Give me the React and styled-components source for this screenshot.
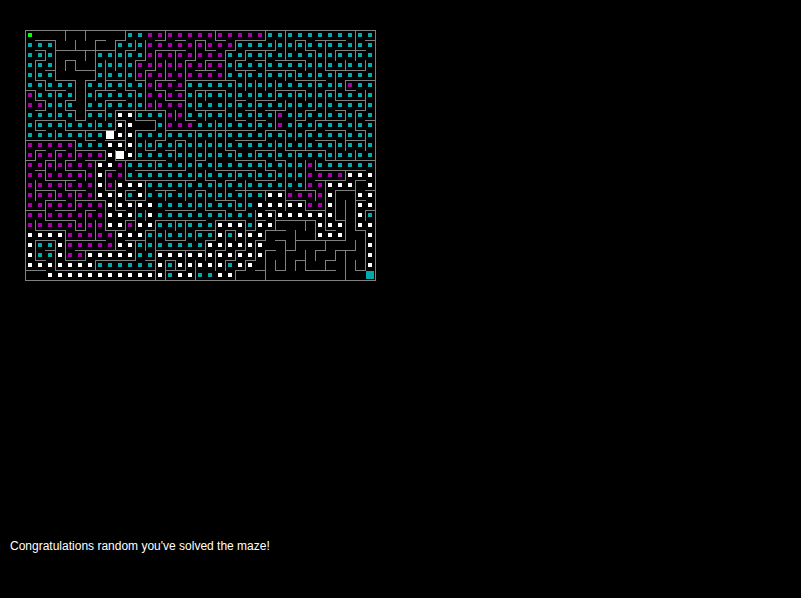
import styled, { createGlobalStyle } from "styled-components";

const GlobalStyle = createGlobalStyle`
    body {
        margin: 0;
        background: #000;
    }
`;

const Page = styled.div`
    width: 801px;
    height: 598px;
    display: flex;
    flex-direction: column;
    background: #000;
    overflow: hidden;
`;
const Board = styled.div`
    position: relative;
    display: grid;
    grid-template-columns: repeat(35, 10px);
    grid-auto-rows: 10px;
    width: 350px;
    margin: 30px 0 0 25px;
`;
const Cell = styled.div`
    display: flex;
    align-items: center;
    justify-content: center;
`;
const colours = { t: "#00aaaa", m: "#aa00aa", w: "#fff", g: "#00ff00", W: "#fff", T: "#00aaaa" };
const Dot = styled.div`
    width: ${(p) => (p.$kind === "W" || p.$kind === "T" ? 8 : 4)}px;
    height: ${(p) => (p.$kind === "W" || p.$kind === "T" ? 8 : 4)}px;
    background: ${(p) => colours[p.$kind]};
`;
const Walls = styled.svg`
    position: absolute;
    left: 0;
    top: 0;
    width: 351px;
    height: 251px;
    shape-rendering: crispEdges;
`;
const Message = styled.p`
    margin: auto 0 45px 10px;
    font-family: "Liberation Sans", Arial, sans-serif;
    font-size: 12px;
    line-height: 14px;
    color: #fff;
`;

// run length rows: t teal, m magenta, w white, g start, W/T big marker, . nothing
const rows = [
    "g1 .9 t2 m12 t11",
    "t3 .6 t3 m9 t14",
    "t3 .4 t5 m8 t15",
    "t3 .4 t4 m9 t15",
    "t3 .4 t4 m9 t15",
    "t5 .1 t6 m4 t16 m1 t2",
    "m1 t4 .1 t6 m4 t19",
    "m2 t3 .1 t6 m4 t19",
    "t5 .1 t3 w2 t3 m2 t9 m1 t9",
    "t9 w2 .2 t1 m3 t8 m1 t9",
    "t8 W1 w2 t24",
    "m5 t3 w3 t24",
    "m8 w1 W1 w1 t24",
    "m7 w2 m1 t18 m1 t6",
    "m7 w1 m2 t18 m4 w3",
    "m7 w1 m1 w3 t16 m2 w3 .1 w1",
    "m7 w3 t1 w1 t12 w2 m4 w1 .2 w2",
    "m8 w5 t10 w5 m2 w1 .2 w2",
    "m8 w3 t1 w1 t10 w8 .2 w1 t1",
    "m8 w2 m1 w2 t6 w3 t1 w2 .4 w3 .1 w2",
    "w4 m5 w3 t7 w1 t1 w3 .5 w3 .2 w1",
    "w1 t2 w1 m5 w2 t7 w6 .10 w1",
    "w1 t2 w1 m2 w5 t2 w11 .10 w1",
    "w7 t6 w1 t1 w5 t1 w2 .11 w1",
    ".2 w12 t1 w2 t2 w2 .13 T1",
];

const cells = rows.flatMap((row) =>
    row.split(" ").flatMap((run) => Array(Number(run.slice(1))).fill(run[0]))
);

// horizontal walls by row line, "from-to" in cells
const horizontal = {
    0: "0-35",
    1: "1-3 7-8 9-10 13-14 15-16 17-18 19-20 21-24 27-28 29-32 34-35",
    2: "1-2 3-9 10-11 13-16 18-19 20-21 22-25 28-29 31-34",
    3: "1-2 4-5 11-12 16-17 18-20 21-22 23-24 25-28",
    4: "2-3 5-7 12-13 17-19 21-23 24-27 30-34",
    5: "1-2 3-5 6-7 8-10 11-12 13-15 16-21 27-30 32-35",
    6: "0-1 2-4 7-9 10-11 13-14 15-16 17-20 25-28 30-31 32-33",
    7: "1-2 4-5 8-10 14-16 21-22 23-25 31-34",
    8: "1-2 4-5 6-8 9-14 17-20 22-23 24-26 28-29 31-32 33-34",
    9: "1-4 5-6 9-10 11-13 16-17 21-22 23-24 27-28 29-32 34-35",
    10: "1-2 4-9 11-13 14-23 24-26 28-29 30-32 33-34",
    11: "0-5 6-7 8-10 13-14 15-16 21-24 29-31 32-34",
    12: "1-2 3-4 5-8 12-13 14-15 20-21 23-25 26-30",
    13: "0-1 2-3 4-5 6-8 9-14 17-18 21-24 25-26 30-35",
    14: "1-2 4-6 8-9 11-16 19-23 24-25 29-34",
    15: "2-5 10-17 18-19 20-21 23-25 29-32 33-34",
    16: "1-3 4-6 8-9 10-11 13-15 17-18 21-26 27-29 31-33 34-35",
    17: "2-4 5-8 10-12 19-21 26-28 33-34",
    18: "0-2 3-5 6-7 9-10 14-17 18-20 21-22 24-25 28-30 34-35",
    19: "2-5 10-11 13-18 19-22 23-24 25-29 31-32",
    20: "1-4 5-6 8-10 12-13 17-19 20-21 22-23 24-26 30-31 33-34",
    21: "1-3 4-8 10-12 14-16 18-19 23-24 25-26 27-32",
    22: "2-3 5-10 13-18 19-20 21-22 24-25 26-27 29-30 31-33",
    23: "1-2 4-6 7-11 12-13 14-15 20-21 22-23 27-28 30-31",
    24: "0-2 3-13 14-16 21-22 23-24 25-26 28-31 33-34",
    25: "0-35",
};

// vertical walls by column line
const vertical = {
    0: "0-25",
    1: "3-5 6-7 9-10 12-13 15-17 19-20 21-23",
    2: "2-3 5-6 7-8 13-15 17-19",
    3: "1-5 6-9 10-11 12-14 16-17 21-24",
    4: "0-1 3-4 7-8 9-10 13-14 15-16 20-23",
    5: "1-2 3-4 5-7 8-9 11-13 16-18 19-20",
    6: "0-1 2-3 5-9 10-11 14-15 18-20 22-23",
    7: "1-5 6-7 9-10 13-17 19-21 23-24",
    8: "3-6 7-9 12-13 14-16 17-20",
    9: "1-4 8-10 12-13 15-18 20-22",
    10: "0-1 2-6 9-12 13-15 16-17 19-20",
    11: "1-2 3-5 6-9 10-13 17-20 21-23",
    12: "1-3 4-8 11-12 15-17 18-19 20-22",
    13: "2-4 5-6 7-8 9-10 11-12 13-14 19-25",
    14: "0-1 3-5 6-7 8-11 16-17 20-21 23-25",
    15: "2-4 8-9 11-13 19-20 23-24",
    16: "3-9 11-14 15-17 19-21 22-24",
    17: "1-3 6-8 10-15 16-18 20-21 23-25",
    18: "1-2 3-4 6-7 8-9 11-13 14-15 16-18 21-23",
    19: "0-1 9-14 15-17 19-21 22-24",
    20: "2-5 6-12 15-17 18-19 20-22 23-24",
    21: "1-2 3-4 5-9 12-13 14-15 17-18 20-21 22-23 24-25",
    22: "2-3 4-6 15-18 19-22 23-24",
    23: "5-10 12-13 14-15 18-20 21-23",
    24: "0-1 2-6 10-11 13-14 16-17 20-21 22-25",
    25: "1-2 5-7 8-10 11-13 14-15 18-20 23-24",
    26: "0-3 4-5 7-8 10-12 13-18 21-24",
    27: "1-2 4-5 6-11 12-15 20-22 23-24",
    28: "1-2 3-4 6-7 8-9 10-12 13-16 17-18 19-20 22-24",
    29: "2-8 9-10 13-14 16-17 19-21 22-23",
    30: "1-4 6-9 12-13 15-20 21-22 23-24",
    31: "2-3 4-7 11-13 16-19 22-23",
    32: "3-4 5-6 8-9 10-12 14-15 17-21 22-25",
    33: "0-3 8-10 12-13 15-20 21-22 23-24",
    34: "3-4 6-8 10-12 18-19 20-24",
    35: "0-25",
};

function segments(table, draw) {
    return Object.entries(table)
        .map(([line, list]) =>
            list
                .split(" ")
                .map((part) => {
                    const [from, to] = part.split("-").map(Number);
                    return draw(Number(line) * 10, from * 10, to * 10);
                })
                .join("")
        )
        .join("");
}

const wallPath =
    segments(horizontal, (y, a, b) => `M${a} ${y + 0.5}H${b + 1}`) +
    segments(vertical, (x, a, b) => `M${x + 0.5} ${a}V${b + 1}`);

function App() {
    return (
        <Page>
            <GlobalStyle />
            <Board>
                {cells.map((kind, i) => (
                    <Cell key={i}>{kind !== "." && <Dot $kind={kind} />}</Cell>
                ))}
                <Walls viewBox="0 0 351 251">
                    <path d={wallPath} fill="none" stroke="#808080" strokeWidth="1" />
                </Walls>
            </Board>
            <Message>Congratulations random you've solved the maze!</Message>
        </Page>
    );
}

export default App;
